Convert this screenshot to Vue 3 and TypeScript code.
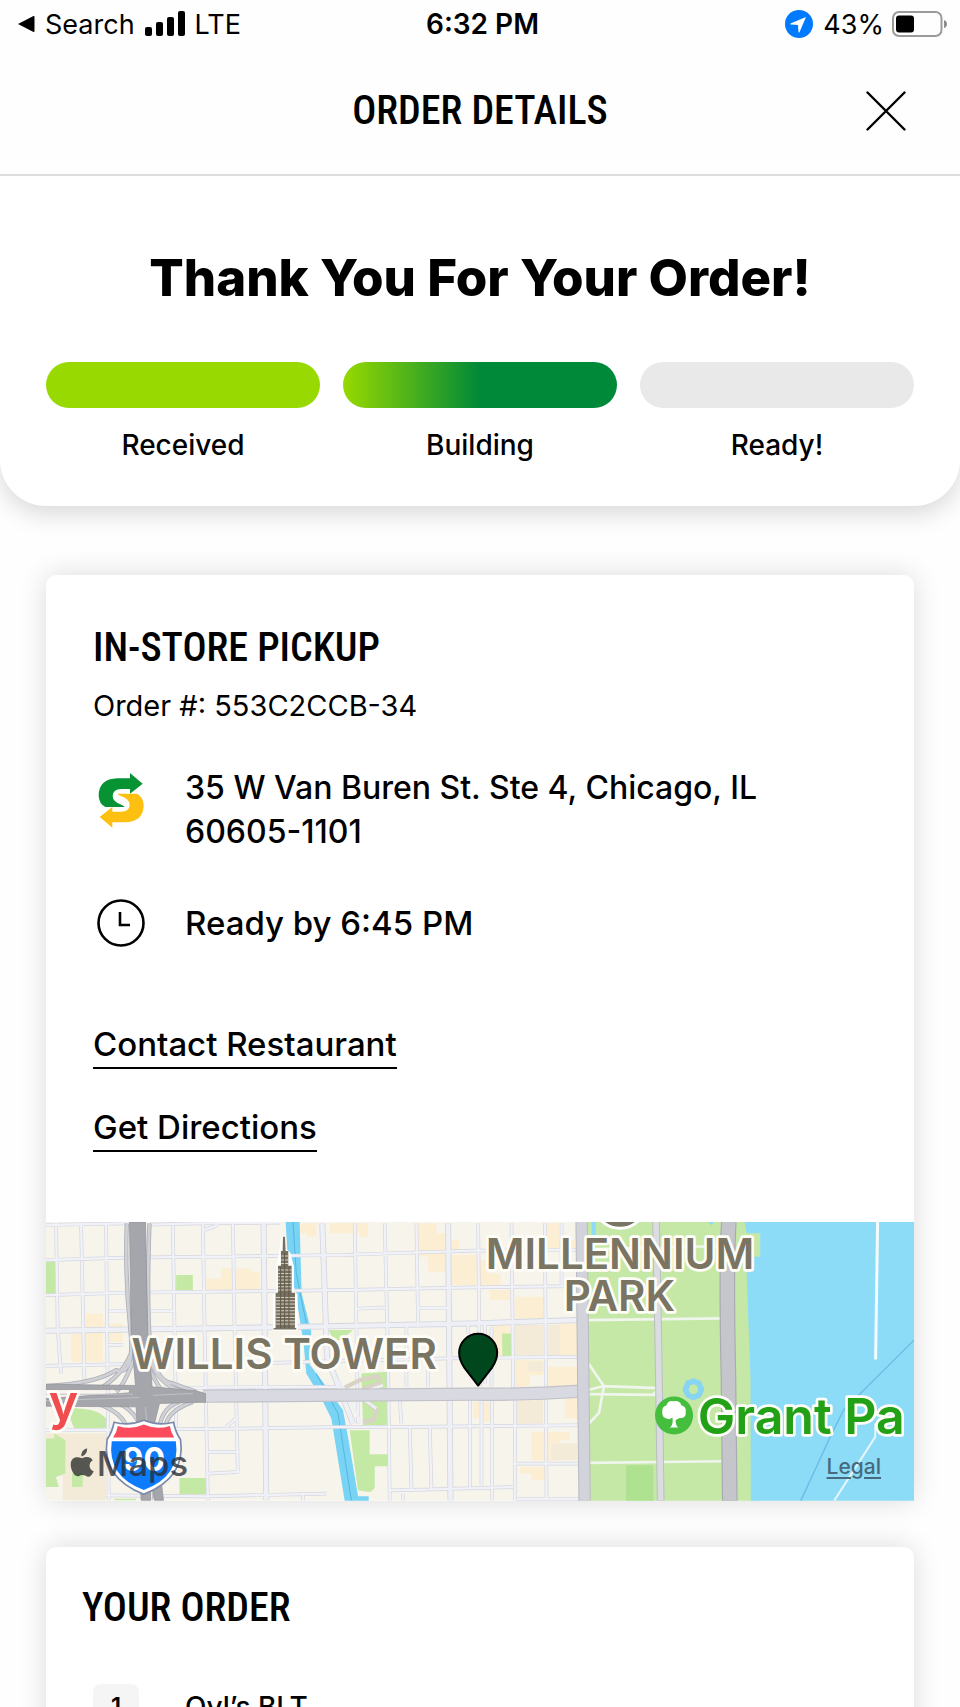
<script setup lang="ts">
interface Step {
  label: string
  state: 'done' | 'active' | 'pending'
}

const steps: Step[] = [
  { label: 'Received', state: 'done' },
  { label: 'Building', state: 'active' },
  { label: 'Ready!', state: 'pending' },
]

const items = [{ qty: 1, name: 'Oyl’s BLT' }]

const minorStreets = [
  'M20 45L260 40M330 44L480 40L720 38',
  'M20 150L260 143L900 135L1300 122L1610 120',
  'M20 255L260 248L900 240L1300 232L1610 228',
  'M20 467L260 462M700 458L900 452L1300 443L1615 440',
  'M350 535L500 532L900 530',
  'M20 660L600 655L930 650L1130 650L1615 645',
  'M200 855L500 858L860 850M1050 840L1150 838L1420 830',
  'M1420 760H1620M1430 866H1620',
  'M208 302H260M325 302H405M208 405H250M505 725H600M505 790L600 785',
  'M950 296L1040 292M1135 293H1225',
  'M50 40L55 355L65 490M125 40L135 510M200 40L208 870',
  'M400 40L405 350L410 650M490 40L495 350L505 870M580 40L585 350L595 790',
  'M560 650L595 620M790 850V870M490 60L525 50L540 38',
  'M945 40L955 640M1035 40L1045 450L1050 870M1130 40L1135 350',
  'M1100 350V530M1165 480V530M1315 40L1320 530',
  'M1285 345V370M1335 345V520M1355 350V530',
  'M1290 570V830M1325 570V825M1357 570V870',
  'M1080 570L1085 640M1110 650L1115 835M1170 650L1175 835M1090 850V870',
  'M1415 40L1420 540M1425 570V870M1515 40L1520 870M1565 40V225',
].join('')

const wideStreets = [
  'M20 362L500 355L900 348L1300 340L1610 330',
  'M672 40L680 870M848 40L862 440L940 640M1225 40L1232 870',
].join('')

const ramps = [
  'M262 40Q256 200 272 350T230 480Q170 520 20 528',
  'M330 40Q322 250 330 380T400 520L470 545',
  'M290 380Q270 480 190 530M300 400Q260 520 230 545',
  'M330 440Q350 520 430 545M325 470L370 550',
  'M160 575Q240 600 260 645M200 570Q270 580 300 640',
  'M420 575Q370 590 360 650M460 575Q390 600 380 640',
].join('')
</script>

<template>
  <div class="page">
    <div class="status">
      <div class="status-side">
        <svg class="back" viewBox="0 0 18 18" aria-hidden="true"><path d="M1 9L16.500 1Q17.500 .6 17.500 2V16Q17.500 17.400 16.500 17Z" /></svg>
        <span>Search</span>
        <svg class="signal" viewBox="0 0 40 26" aria-hidden="true">
          <rect x="0" y="16" width="7" height="9" rx="2" />
          <rect x="11" y="11" width="7" height="14" rx="2" />
          <rect x="22" y="6" width="7" height="19" rx="2" />
          <rect x="33" y="0" width="7" height="25" rx="2" />
        </svg>
        <span>LTE</span>
      </div>
      <strong class="time">6:32 PM</strong>
      <div class="status-side end">
        <svg class="locate" viewBox="0 0 28 28" aria-hidden="true">
          <circle cx="14" cy="14" r="14" fill="#007aff" />
          <path d="M21 7L5.500 13.600Q5 14.500 6 14.600L13 15L13.500 22Q14 23 14.600 22Z" fill="#fff" />
        </svg>
        <span>43%</span>
        <svg class="battery" viewBox="0 0 56 26" aria-hidden="true">
          <rect x="1" y="1" width="48.500" height="24" rx="6" fill="none" stroke="#9b9b9b" stroke-width="2" />
          <rect x="4" y="4.500" width="18" height="17" rx="3" />
          <path d="M52 9Q55 10 55 13T52 17Z" fill="#8c8c8c" />
        </svg>
      </div>
    </div>

    <header class="topbar">
      <h1 class="condensed">ORDER DETAILS</h1>
      <button class="close" type="button" aria-label="Close">
        <svg viewBox="0 0 40 40" aria-hidden="true"><path d="M1.500 1.500L38.500 38.500M38.500 1.500L1.500 38.500" /></svg>
      </button>
    </header>

    <section class="hero">
      <h2>Thank You For Your Order!</h2>
      <ol class="steps">
        <li v-for="step in steps" :key="step.label">
          <span class="bar" :class="step.state"></span>
          <span>{{ step.label }}</span>
        </li>
      </ol>
    </section>

    <main>
      <section class="card">
        <div class="pickup">
          <h3 class="condensed">IN-STORE PICKUP</h3>
          <p class="order-no">Order #: 553C2CCB-34</p>
          <div class="row">
            <svg class="brand" viewBox="0 0 150 180" aria-hidden="true">
              <g transform="translate(-46 -62)">
                <path fill="#079333" d="M186 100L148 68V84H110Q54 86 54 136Q55 160 74 170H131Q132 167 122 163Q96 154 96 137Q97 116 122 116H148V130Z" />
                <path fill="#fdc010" transform="rotate(180 121.500 150)" d="M186 100L148 68V84H110Q54 86 54 136Q55 160 74 170H131Q132 167 122 163Q96 154 96 137Q97 116 122 116H148V130Z" />
              </g>
            </svg>
            <address>35 W Van Buren St. Ste 4, Chicago, IL 60605-1101</address>
          </div>
          <div class="row ready">
            <svg class="clock" viewBox="0 0 50 50" aria-hidden="true">
              <circle cx="25" cy="25" r="22.500" />
              <path d="M24 14V27H34" />
            </svg>
            <span>Ready by 6:45 PM</span>
          </div>
          <div class="links">
            <a href="#contact">Contact Restaurant</a>
            <a href="#directions">Get Directions</a>
          </div>
        </div>

        <div class="map">
          <svg class="map-art" viewBox="20 36 2601 835" role="img" aria-label="Map of the restaurant area">
            <rect x="20" y="36" width="2601" height="835" fill="#f7f4ec" />
            <!-- city blocks -->
            <path fill="#fbeed3" d="M500 205H545V175H578V240H500ZM590 175H635V185H660V240H590ZM138 310H190V340H250V395H210V345H190V455H95V370H138ZM780 40H830V80H800V70H780ZM870 40H985V80H960V70H870ZM1135 40H1190V70H1225V90H1258V125H1222V185H1165V140H1135ZM1230 135H1310V225H1230ZM1320 150H1350V190H1382V225H1320ZM1520 40H1558V90H1605V115H1520ZM1350 240H1410V270H1350ZM1425 260H1510V325H1425ZM1355 345H1410V400H1385V440H1355ZM1560 340H1612V435H1560ZM1425 450H1510V495H1470V530H1425ZM1525 470H1612V530H1525ZM1300 575H1318V625H1300ZM1330 575H1350V635H1330ZM1575 560H1615V625H1575ZM1475 665H1590V690H1560V750H1475ZM1440 770H1515V810H1475V790H1440Z" />
            <path fill="#f4ead8" d="M20 670H200V870H70V770H20ZM1425 345H1510V435H1425ZM1525 345H1560V435H1525ZM1430 570H1510V640H1430ZM1535 700H1612V750H1535ZM1465 455H1510V485H1465Z" />
            <path fill="#c4e9a5" d="M20 155H48V252H20ZM410 195H460V242H410ZM80 595Q170 590 200 625V655H105ZM20 685H45V670L78 690V790L50 800L58 830H20ZM98 790H130V830H98ZM420 803H500V852H420ZM868 360H940L905 390H880ZM965 490L1042 485V645H970ZM930 660H990V732H1045V768H1005V830Q1000 845 985 845L955 840ZM1387 370H1418V438H1387ZM225 865H290V870H225Z" />
            <!-- river -->
            <path fill="#79d3f4" d="M738 36H780L786 250L815 365L808 460L868 540L910 600L925 680L955 858H987V871H915L875 625L845 565L800 490L792 400L768 250L745 150Z" />
            <path fill="none" stroke="#55b7df" stroke-width="3" d="M760 36L770 190L800 340M830 490L895 610L935 870" />
            <!-- streets -->
            <path class="street" stroke="#d4d6df" stroke-width="11" :d="minorStreets" />
            <path class="street" stroke="#d4d6df" stroke-width="18" :d="wideStreets" />
            <path class="street" stroke="#f1f2f8" stroke-width="7" :d="minorStreets" />
            <path class="street" stroke="#eff0f6" stroke-width="13" :d="wideStreets" />
            <path class="street" stroke="#d8d3c5" stroke-width="13" d="M910 535L960 510L1015 498L1020 520L970 535M975 570L1012 600L1000 630L970 635" />
            <path class="street" stroke="#eff0f6" stroke-width="8" d="M900 510L965 640M975 570L1010 595M985 540L1030 525" />
            <!-- expressway -->
            <path class="street" stroke="#aeb0b7" stroke-width="13" :d="ramps" />
            <path class="street" stroke="#d0d1d7" stroke-width="8" :d="ramps" />
            <path class="street" stroke="#c0c1c9" stroke-width="40" d="M490 558L1300 552Q1450 554 1625 543" />
            <path class="street" stroke="#d8d9e1" stroke-width="33" d="M490 558L1300 552Q1450 554 1625 543" />
            <path fill="#a5a5ac" stroke="#8f9097" stroke-width="2" d="M270 36H318L325 370L338 530L470 542L498 550V576L360 580L345 640L372 870H345L330 800L334 870H305L290 590L20 588V565L270 548V538H20V522L288 526L275 370Z" />
            <path fill="none" stroke="#c0c0c6" stroke-width="3" d="M20 552H280M340 555L460 550M20 572L300 562M318 590L340 870" />
            <!-- park and lake -->
            <path fill="#c5e8a6" d="M1640 36H2160V871H1640Z" />
            <path fill="#aee291" d="M1758 765H1840V871H1758Z" />
            <path fill="#8cdbf7" d="M2113 36H2621V871H2132L2131 500L2120 200L2116 100L2135 140H2160V70H2120ZM1655 36H1667V78H1655ZM2005 36H2022L2014 46Z" />
            <path class="street" stroke="#f0f5ee" stroke-width="8" d="M1640 330L2045 325M1640 758L2045 753M1640 118L2045 108M1640 540L1690 528L1855 534M1640 552L1855 554M1642 455L1692 528L1677 608L1645 642M1838 554L1850 542" />
            <path class="street" stroke="#b9bac2" stroke-width="37" d="M1625 36L1630 520L1634 871" />
            <path class="street" stroke="#d3d3dc" stroke-width="31" d="M1625 36L1630 520L1634 871" />
            <path class="street" stroke="#bbbec2" stroke-width="23" d="M1848 36L1855 400L1862 871" />
            <path class="street" stroke="#dadce2" stroke-width="17" d="M1848 36L1855 400L1862 871" />
            <path class="street" stroke="#a9aab2" stroke-width="47" d="M2066 36Q2058 180 2065 500L2069 871" />
            <path class="street" stroke="#c5c5cc" stroke-width="40" d="M2066 36Q2058 180 2065 500L2069 871" />
            <path fill="none" stroke="#6abde6" stroke-width="4" d="M2621 390L2410 600L2370 680L2282 871" />
            <path fill="none" stroke="#f3fbfe" stroke-width="9" d="M2512 36L2506 448" />
            <path fill="none" stroke="#e5f6fc" stroke-width="6" d="M2505 640V680L2382 871" />
            <path fill="none" stroke="#87d5f3" stroke-width="17" d="M1944 519L1960 513L1976 519L1984 538L1976 555L1960 562L1944 555L1936 538Z" />
            <!-- tower landmark -->
            <path fill="#fff" stroke="#fff" stroke-width="12" d="M731 80L735 120L746 130L757 170V248L768 255V356H706V255L716 248V170L724 128Z" />
            <path fill="#777060" d="M730 80H736L738 123H746V167H756V248H766V354H770V358H702V354H708V248H715V167H724V123H729Z" />
            <path fill="none" stroke="#d3cdbd" stroke-width="3" d="M708 262H766M708 272H766M708 282H766M708 292H766M708 302H766M708 312H766M708 322H766M708 332H766M708 342H766M715 180H756M715 190H756M715 200H756M715 210H756M715 220H756M715 230H756M715 240H756M725 138H746M725 150H746M725 160H746" />
            <path fill="none" stroke="#5f594c" stroke-width="3" d="M735 128V354M723 170V354M748 170V354" />
            <circle cx="1740" cy="-24" r="79" fill="#7a7463" stroke="#fff" stroke-width="9" />
            <!-- interstate shield -->
            <path fill="#fff" stroke="#7b89aa" stroke-width="5" d="M224 636Q270 648 313 630Q356 648 402 636Q408 666 423 688Q440 802 313 852Q186 802 203 688Q218 666 224 636Z" />
            <path fill="#fb4b5c" d="M235 647Q276 660 313 643Q350 660 391 647Q394 666 404 682H221Q232 666 235 647Z" />
            <path fill="#0d7bfb" d="M217 693H409Q424 798 313 839Q202 798 217 693Z" />
            <text x="313" y="782" class="route">90</text>
            <!-- place names -->
            <text x="734" y="478" class="place">WILLIS TOWER</text>
            <text x="1740" y="177" class="place">MILLENNIUM</text>
            <text x="1738" y="303" class="place">PARK</text>
            <text x="28" y="628" class="place red">y</text>
            <circle cx="1902" cy="616" r="57" fill="#45bd3d" />
            <path fill="#fff" d="M1897 622L1888 627Q1862 624 1867 602Q1866 590 1879 586Q1884 570 1900 573Q1919 570 1924 585Q1940 590 1937 605Q1939 624 1919 623L1907 629Q1905 644 1915 652H1888Q1898 648 1898 630Z" />
            <text x="1973" y="672" class="place green">Grant Pa</text>
            <!-- location pin -->
            <path fill="#00471d" stroke="#000" stroke-width="6" stroke-linejoin="round" d="M1315 526L1274 473Q1258 450 1258 428A57 57 0 0 1 1372 428Q1372 450 1356 473Z" />
            <!-- map provider -->
            <g opacity=".78">
              <path fill="#292d29" d="M143 714Q145 732 126 739Q124 720 143 714ZM128 744C139 739 153 738 160 750C146 758 148 778 163 783C156 798 149 804 138 796Q128 792 119 797C105 803 94 779 94 763C94 743 109 736 128 744Z" />
              <text x="172" y="797" class="provider">Maps</text>
            </g>
          </svg>
          <a class="legal" href="#legal">Legal</a>
        </div>
      </section>

      <section class="card order">
        <h3 class="condensed">YOUR ORDER</h3>
        <ul>
          <li v-for="item in items" :key="item.name">
            <span class="qty">{{ item.qty }}</span>
            <span>{{ item.name }}</span>
          </li>
        </ul>
      </section>
    </main>
  </div>
</template>

<style>
html,
body {
  margin: 0;
  background: #fefefe;
}

body {
  overflow: hidden;
}
</style>

<style scoped>
.page {
  height: 100vh;
  overflow: hidden;
  background: #fefefe;
  color: #000;
  font-family: Inter, "Liberation Sans", sans-serif;
}

h1, h2, h3, p, ol, ul {
  margin: 0;
  padding: 0;
  list-style: none;
}

.condensed {
  font-family: "Roboto Condensed", "Liberation Sans Narrow", "Arial Narrow", Roboto, sans-serif;
  font-size: 40px;
  font-weight: 500;
  line-height: 48px;
}

.status {
  display: grid;
  grid-template-columns: 1fr auto 1fr;
  align-items: center;
  height: 48px;
  padding: 0 12px 0 17px;
  font-size: 27px;
}

.status-side {
  display: flex;
  align-items: center;
  gap: 10px;
}

.status-side.end {
  justify-content: flex-end;
}

.time {
  font-size: 28px;
  font-weight: 600;
}

.back {
  width: 18px;
  height: 18px;
}

.signal {
  width: 40px;
  height: 26px;
}

.locate {
  width: 28px;
  height: 28px;
}

.battery {
  width: 56px;
  height: 26px;
  margin-left: -2px;
}

.topbar {
  display: grid;
  grid-template-columns: 1fr auto 1fr;
  align-items: center;
  height: 126px;
  border-bottom: 2px solid #dcdedd;
}

.topbar h1 {
  grid-column: 2;
}

.close {
  justify-self: end;
  width: 40px;
  height: 40px;
  margin-right: 54px;
  padding: 0;
  border: 0;
  background: none;
}

.close svg {
  display: block;
  width: 40px;
  height: 40px;
  fill: none;
  stroke: #000;
  stroke-width: 2.4;
  stroke-linecap: round;
}

.hero {
  position: relative;
  padding: 70px 46px 44px;
  border-radius: 0 0 46px 46px;
  background: #fff;
  box-shadow: 0 8px 24px rgba(0, 0, 0, 0.15);
  clip-path: inset(0 0 -40px);
}

.hero h2 {
  font-size: 51px;
  font-weight: 800;
  line-height: 64px;
  text-align: center;
}

.steps {
  display: grid;
  grid-template-columns: repeat(3, 1fr);
  gap: 23px;
  margin-top: 52px;
}

.steps li {
  display: flex;
  flex-direction: column;
  gap: 20px;
  font-size: 28px;
  font-weight: 500;
  line-height: 34px;
  text-align: center;
}

.bar {
  height: 46px;
  border-radius: 23px;
  background: #e9e9e9;
}

.bar.done {
  background: #97d900;
}

.bar.active {
  background: linear-gradient(90deg, #97d900, #008938 50%);
}

main {
  display: flex;
  flex-direction: column;
  gap: 46px;
  padding: 69px 46px 46px;
}

.card {
  overflow: hidden;
  border-radius: 10px 10px 0 0;
  background: #fff;
  box-shadow: 0 0 28px rgba(0, 0, 0, 0.14);
}

.pickup {
  padding: 49px 47px 70px;
}

.order-no {
  margin-top: 16px;
  font-size: 29px;
  line-height: 36px;
}

.row {
  display: flex;
  gap: 36px;
  margin-top: 42px;
  font-size: 32px;
  font-weight: 500;
  line-height: 44px;
}

.row.ready {
  align-items: center;
  margin-top: 44px;
  font-size: 33px;
}

address {
  max-width: 620px;
  font-style: normal;
}

.brand,
.clock {
  flex: none;
  width: 56px;
}

.brand {
  height: 60px;
  margin-top: 5px;
}

.clock {
  height: 50px;
  fill: none;
  stroke: #000;
  stroke-width: 2.6;
}

.links {
  display: flex;
  flex-direction: column;
  align-items: flex-start;
  gap: 38px;
  margin-top: 76px;
}

.links a {
  padding-bottom: 3px;
  border-bottom: 2px solid #000;
  color: #000;
  font-size: 33px;
  font-weight: 500;
  line-height: 40px;
  text-decoration: none;
}

.map {
  position: relative;
}

.map-art {
  display: block;
  width: 100%;
  height: auto;
}

.street {
  fill: none;
  stroke-linejoin: round;
}

.place {
  fill: #7a7463;
  stroke: #fffdf8;
  stroke-width: 16px;
  stroke-linejoin: round;
  paint-order: stroke;
  font-size: 126px;
  font-weight: 600;
  text-anchor: middle;
}

.place.red {
  fill: #f04d51;
  font-size: 150px;
  text-anchor: start;
}

.place.green {
  fill: #22a116;
  font-size: 150px;
  text-anchor: start;
}

.route {
  fill: #fff;
  font-size: 96px;
  font-weight: 700;
  text-anchor: middle;
}

.provider {
  fill: #292d33;
  font-size: 104px;
  font-weight: 500;
}

.legal {
  position: absolute;
  right: 33px;
  bottom: 22px;
  color: #466b7d;
  font-size: 21px;
  font-weight: 500;
  line-height: 24px;
  text-underline-offset: 3px;
}

.order {
  padding: 37px 36px 46px;
}

.order ul {
  margin-top: 52px;
  padding-left: 11px;
}

.order li {
  display: flex;
  align-items: center;
  gap: 46px;
  font-size: 28px;
  font-weight: 500;
}

.qty {
  width: 46px;
  border-radius: 8px;
  background: #f5f5f5;
  font-size: 24px;
  font-weight: 600;
  line-height: 46px;
  text-align: center;
}
</style>
